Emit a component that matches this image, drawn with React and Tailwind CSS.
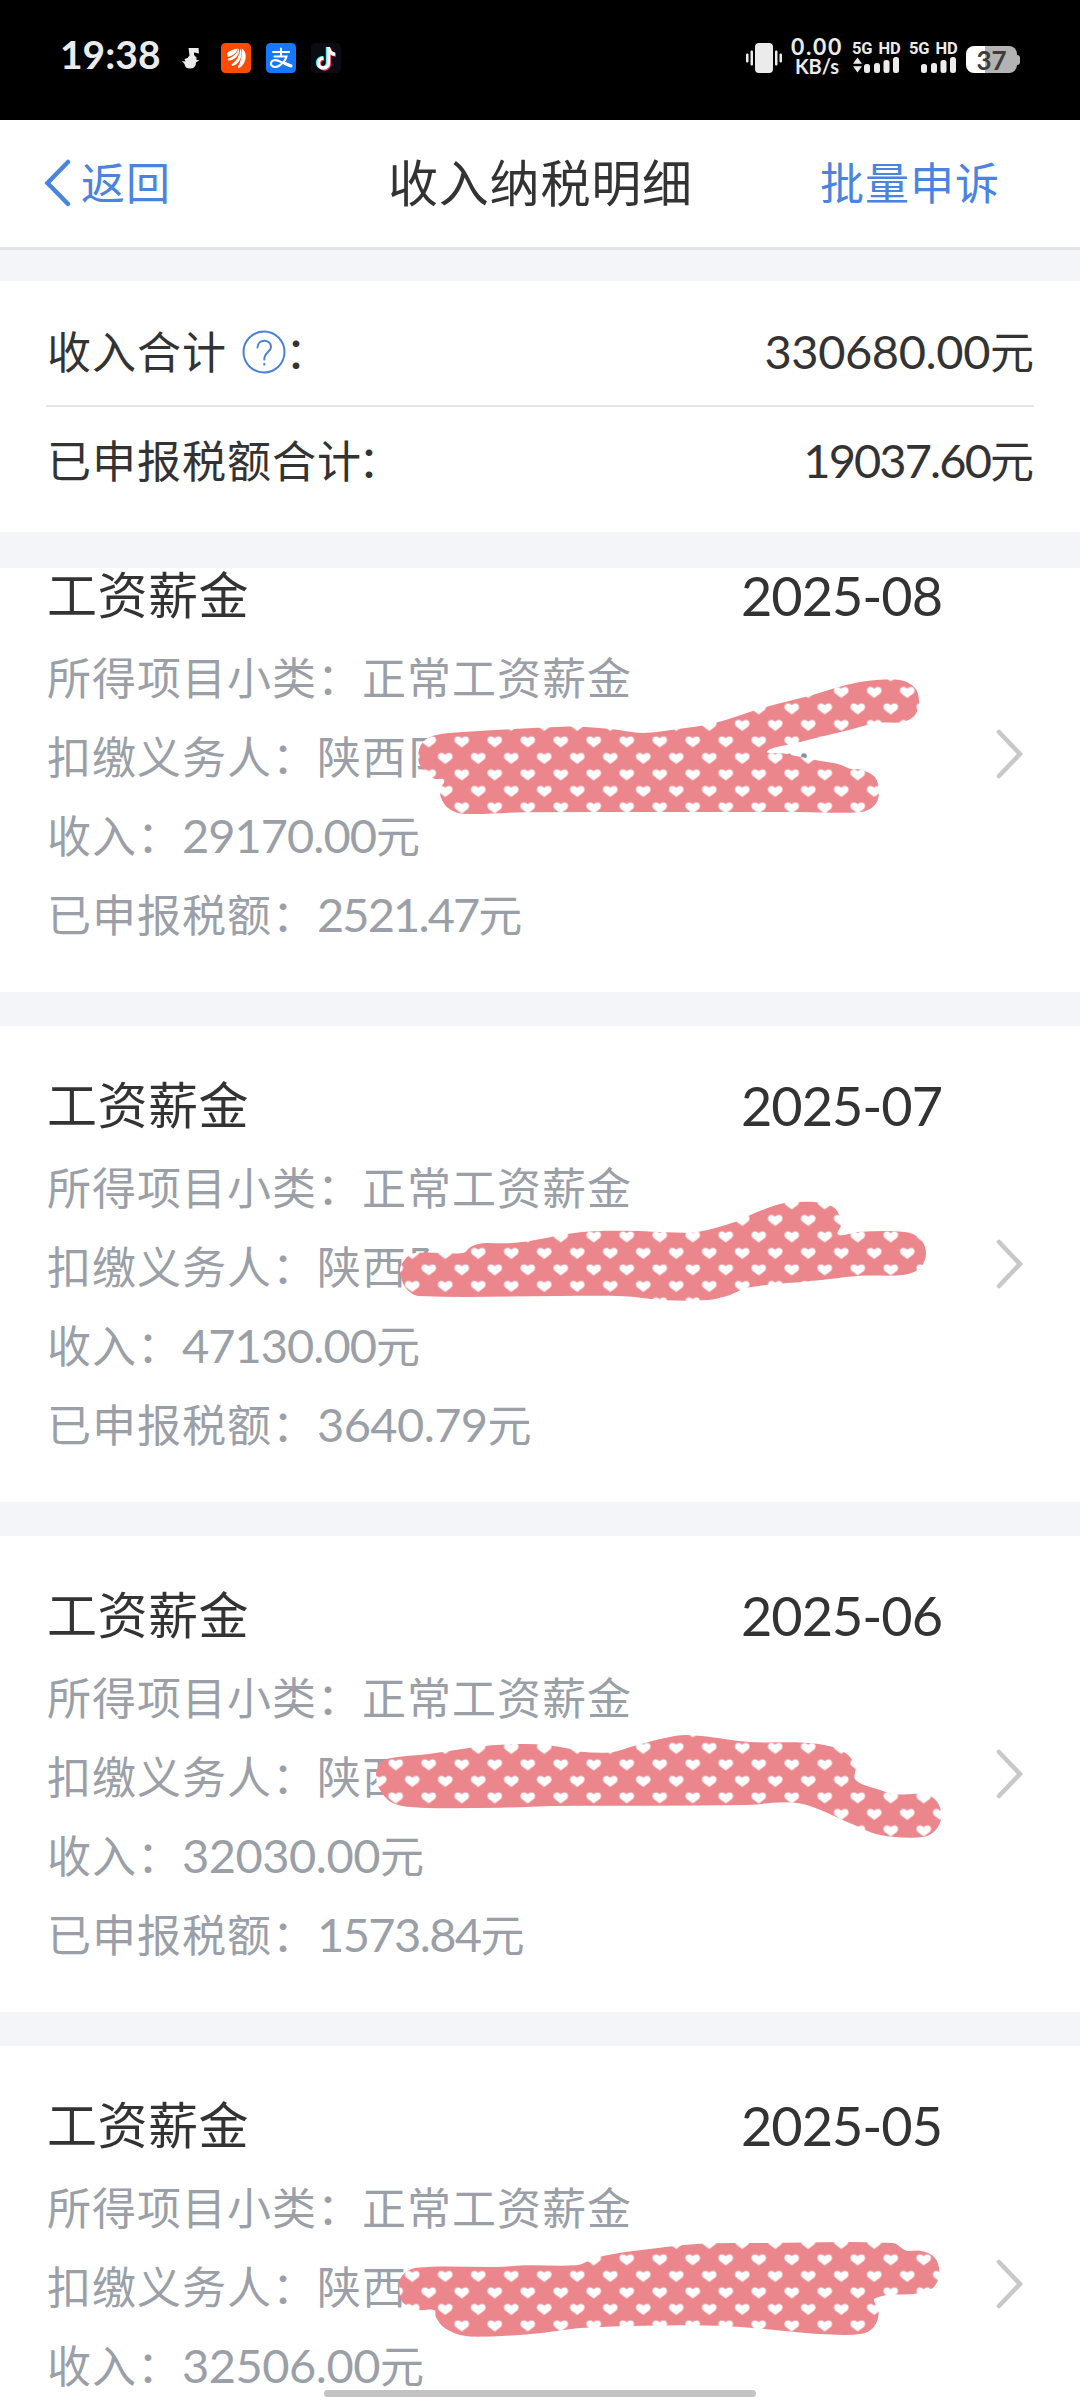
import React from 'react';

const records = [
  { month: '2025-08', agent: '陕西阝', income: '29170.00', tax: '2521.47', incomeFit: 'tracking-[-1px]', taxFit: 'tracking-[-1.9px]' },
  { month: '2025-07', agent: '陕西阝', income: '47130.00', tax: '3640.79', incomeFit: 'tracking-[-1px]', taxFit: 'tracking-[-0.6px]' },
  { month: '2025-06', agent: '陕西', income: '32030.00', tax: '1573.84', incomeFit: 'tracking-[-0.5px]', taxFit: 'tracking-[-1.6px]' },
  { month: '2025-05', agent: '陕西', income: '32506.00', tax: '', incomeFit: 'tracking-[-0.5px]', taxFit: '' },
];

// outlines of the brush marks, as x y pairs
const marks = [
  [418, 757, 423, 742, 436, 735, 463, 732, 513, 729, 563, 726.7, 586, 727, 613, 729.3, 643, 733, 678, 729, 716, 722.7, 766, 707, 810, 695.7, 846, 685, 869, 680.7, 900, 680, 915, 688, 919, 702, 915, 715, 903, 722, 877, 723, 846, 730.7, 800, 742, 767.6, 750.7, 785, 753.7, 819, 760.7, 838, 764, 852, 769.3, 861, 769.7, 874.7, 777, 879, 792, 874.7, 805, 861, 812, 800, 812, 524, 812.3, 463, 813.7, 448, 808, 440.7, 797, 440.7, 788, 444, 780, 434.6, 778.7, 423, 770],
  [400, 1272, 403, 1262, 414, 1253.3, 463, 1253, 471, 1246.7, 482.5, 1243.3, 505, 1243.3, 528, 1241.3, 567, 1234, 597, 1231, 639, 1231, 666, 1232.3, 697, 1232, 735, 1222, 746.5, 1216.7, 769.5, 1207.3, 785, 1203, 817, 1202.3, 832.6, 1206.7, 838.4, 1213.3, 841, 1225, 838.4, 1234.7, 857.5, 1232, 905, 1232, 920.7, 1239.3, 926, 1253.3, 920.7, 1267.3, 905, 1274.7, 861, 1275.7, 811.6, 1281, 750, 1287.3, 727, 1296, 708, 1300, 666, 1300.3, 624, 1296.3, 560, 1296, 419, 1296, 406, 1288.3],
  [376, 1775, 380, 1763.3, 389.5, 1758.3, 429, 1754, 468.6, 1748, 492, 1745.3, 524, 1744, 548, 1745.3, 569.5, 1748.7, 581, 1751.7, 611, 1752.3, 634.7, 1745.7, 666, 1737.7, 686, 1735, 710, 1737, 749, 1742, 805, 1742.7, 832, 1746.7, 848, 1755, 855.3, 1766.7, 855.7, 1780, 880, 1790, 894, 1794.3, 925, 1794.3, 937, 1801.7, 941.5, 1816.7, 935, 1830.7, 923, 1837, 892, 1836.7, 872, 1832.7, 852, 1824, 799, 1803.3, 745, 1805, 650, 1805.7, 556, 1806, 500, 1807.7, 421, 1807.7, 393.5, 1803.3, 380, 1790],
  [399.5, 2291.7, 401.3, 2276.7, 417, 2267.7, 497.7, 2267, 525, 2265.3, 576, 2265.3, 589.6, 2260.7, 603, 2256, 635.5, 2250.7, 700, 2243.7, 760, 2243, 892.6, 2243, 906.4, 2250.7, 920, 2250.7, 934, 2256.7, 939.4, 2271.7, 934, 2286.7, 918, 2293.3, 875.2, 2298.3, 878.8, 2311.7, 874, 2326.7, 860.5, 2334, 819, 2334, 787, 2331.3, 741, 2327, 695, 2325.3, 644.7, 2325.7, 580, 2328, 543.7, 2332.7, 502, 2336, 465.6, 2336, 445, 2328.3, 435.8, 2316.7, 434.4, 2310.3, 419.7, 2310, 403.6, 2303.3],
];

function smoothPath(p) {
  const n = p.length / 2;
  const at = (i) => {
    const k = ((i + n) % n) * 2;
    return [p[k], p[k + 1]];
  };
  let d = `M${p[0]} ${p[1]}`;
  for (let i = 0; i < n; i++) {
    const [a, b, c, e] = [at(i - 1), at(i), at(i + 1), at(i + 2)];
    const len = Math.hypot(c[0] - b[0], c[1] - b[1]);
    const t1 = Math.min(1, len / (Math.hypot(c[0] - a[0], c[1] - a[1]) || 1)) / 3;
    const t2 = Math.min(1, len / (Math.hypot(e[0] - b[0], e[1] - b[1]) || 1)) / 3;
    d += `C${b[0] + (c[0] - a[0]) * t1} ${b[1] + (c[1] - a[1]) * t1} ${c[0] - (e[0] - b[0]) * t2} ${c[1] - (e[1] - b[1]) * t2} ${c[0]} ${c[1]}`;
  }
  return d + 'Z';
}

function BrushMarks() {
  const heart = 'M0 5.6L-6 1C-8.6 -1.8 -7 -5.7 -3.7 -5.6C-1.8 -5.5 -0.6 -4.6 0 -3.6C0.6 -4.6 1.8 -5.5 3.7 -5.6C7 -5.7 8.6 -1.8 6 1Z';
  return (
    <svg className="pointer-events-none absolute left-0 top-0" width="1080" height="2400" viewBox="0 0 1080 2400">
      <defs>
        <pattern id="hearts" x="453.5" y="733.7" width="33" height="33" patternUnits="userSpaceOnUse">
          <rect width="33" height="33" fill="#eb868c" />
          <path d={heart} transform="translate(8.25 8.25)" fill="#fff" />
          <path d={heart} transform="translate(24.75 24.75)" fill="#fff" />
        </pattern>
      </defs>
      <circle cx="789" cy="756" r="2.5" fill="#9b9fa8" />
      <circle cx="804" cy="756" r="2.8" fill="#8b909a" />
      {marks.map((m, i) => (
        <path key={i} d={smoothPath(m)} fill="url(#hearts)" />
      ))}
    </svg>
  );
}

function Signal({ arrows }) {
  return (
    <div className="flex w-[47px] flex-col items-end">
      <span className="h-[17px] w-full whitespace-nowrap font-[Roboto] text-[16.5px] font-bold leading-[17px] tracking-[-0.1px] [word-spacing:2px]">5G HD</span>
      <svg width="47" height="17" viewBox="0 0 47 17" fill="#ebebeb">
        {arrows && <path d="M5.5 0.5L10 6.8H1ZM5.5 15.5L10 9.2H1Z" />}
        <rect x="12" y="7" width="6" height="9" rx="2.5" />
        <rect x="22" y="6" width="6" height="10" rx="2.5" />
        <rect x="31.5" y="3" width="6" height="13" rx="2.5" />
        <rect x="41" y="0" width="6" height="16" rx="2.5" />
      </svg>
    </div>
  );
}

function StatusBar() {
  return (
    <div className="flex h-[120px] items-start bg-black pt-[38px] text-[#ebebeb]">
      <span className="-mt-[2px] ml-[60px] w-[122px] whitespace-nowrap text-[39px] font-bold leading-[37px]">19:38</span>
      <svg className="mt-[10px]" width="18" height="21" viewBox="0 0 18 21" fill="#ebebeb">
        <path d="M6.5 0H16.5L17 5.5L12 4.5V7L14.5 9.5V12H17.5L14 14.5Q14 20.5 8 20.5Q3 20.5 2.5 16L0 13L3.5 13.5L2.5 11L5.5 10L7.5 7.5Z" />
      </svg>
      <svg className="ml-[21px] mt-[5px]" width="30" height="30" viewBox="0 0 30 30">
        <rect width="30" height="30" rx="4.5" fill="#fe4a03" />
        <g fill="#fff">
          <path d="M6 10Q11 6 17 5.5Q15.5 10 11 12.5Q8.500 14 6.500 13.500Z" />
          <path d="M6.5 16Q15 13 17.8 5.5Q19 10 15 14.5Q11 18 7.5 17.5Z" />
          <path d="M10.5 21.5Q18.500 16 19.3 5.5Q22 11.5 18.5 17.500Q15.5 22 11.5 23Z" />
          <path d="M17 23.5Q21.5 16 20.800 5.5Q25.800 8.5 24.400 16.5Q22.500 23 17.5 25.5Z" />
        </g>
      </svg>
      <svg className="ml-[15px] mt-[5px]" width="30" height="30" viewBox="0 0 30 30" fill="none" stroke="#fff" strokeLinecap="round">
        <rect width="30" height="30" rx="4.5" fill="#1677ff" stroke="none" />
        <path d="M7 9H23M15 5.5V13.5M8.5 13.5H20.5Q19 19 13.5 22.5C9 25.5 4.5 23.5 5 20C5.5 16.5 10 16.5 14 18.5L25 23" strokeWidth="2.1" />
        <path d="M19 20.5L25 23" strokeWidth="3" />
      </svg>
      <svg className="ml-[15px] mt-[5px]" width="30" height="30" viewBox="0 0 30 30" fill="none">
        <rect width="30" height="30" rx="4.5" fill="#0b0b14" />
        <path d="M16.5 4V19.5A5 5 0 1 1 11.8 14.7M16.5 5.5Q18 10.5 23 10.7" stroke="#25f4ee" strokeWidth="3.4" />
        <path d="M18.5 5V20.5A5 5 0 1 1 13.2 16M18.5 6Q20 11.7 25 12" stroke="#fe2c55" strokeWidth="3.4" />
        <path d="M17.5 4V20A5 5 0 1 1 12.5 15M17.5 5Q19 11 24 11.3" stroke="#fff" strokeWidth="3.4" />
      </svg>
      <svg className="ml-auto mt-[5px]" width="36" height="30" viewBox="0 0 36 30" fill="#ebebeb">
        <rect x="9" width="18" height="30" rx="4" />
        <rect x="0" y="10.5" width="2.5" height="9" rx="1" />
        <rect x="4.5" y="7.5" width="2.5" height="15" rx="1" />
        <rect x="29" y="7.5" width="2.5" height="15" rx="1" />
        <rect x="33.5" y="10.5" width="2.5" height="9" rx="1" />
      </svg>
      <div className="ml-[8px] flex w-[54px] flex-col items-center whitespace-nowrap font-bold">
        <span className="-mt-[2px] text-[23px] leading-[21px] tracking-[1.6px]">0.00</span>
        <span className="text-[20px] leading-[19px]">KB/s</span>
      </div>
      <div className="ml-[8px] flex gap-[10px] pt-[2px]">
        <Signal arrows />
        <Signal />
      </div>
      <div className="ml-[10px] mt-[8px] flex items-center">
        <div className="flex h-[27px] w-[51px] items-center justify-center rounded-[8px] bg-linear-to-r from-white from-[37%] to-[#b3b3b3] to-[37%] text-[26px] font-bold leading-none text-[#3c3c3c]">
          37
        </div>
        <div className="h-[10px] w-[3px] rounded-r-[3px] bg-[#b3b3b3]" />
      </div>
      <div className="w-[60px]" />
    </div>
  );
}

function NavBar() {
  return (
    <div className="flex h-[130px] items-center border-b-[3px] border-[#e2e4e7] bg-white pb-[2px] text-[44px] tracking-[1px] text-[#4a84e0]">
      <div className="flex w-[388px] items-center pl-[44px]">
        <svg width="27" height="48" viewBox="0 0 27 48" fill="none" stroke="#4a84e0" strokeWidth="4.5" strokeLinecap="round">
          <path d="M24 3L3.5 24L24 45" />
        </svg>
        <span className="ml-[10px] leading-[60px]">返回</span>
      </div>
      <span className="w-[432px] text-[50px] leading-[60px] tracking-[0.8px] text-[#333]">
        收入纳税明细
      </span>
      <span className="leading-[60px]">批量申诉</span>
    </div>
  );
}

function Summary() {
  return (
    <div className="mt-[31px] h-[251px] bg-white px-[46px] pt-[14px] text-[44px] text-[#333]">
      <div className="flex h-[112px] items-center justify-between border-b-2 border-[#e4e6e6] pt-[3px]">
        <div className="flex items-center pl-px tracking-[1px]">
          收入合计
          <svg className="ml-[15px] mr-[-1px]" width="44" height="44" viewBox="0 0 44 44" fill="none" stroke="#4a82d6" strokeWidth="2">
            <circle cx="22" cy="22" r="20.5" />
            <path d="M15.5 17.5C15.5 8.5 29 8.5 29 17C29 22 22.3 22 22.3 29.5" strokeLinecap="round" />
            <path d="M22.3 33V35.5" />
          </svg>
          ：
        </div>
        <span><span className="text-[47px] tracking-[-0.4px]">330680.00</span>元</span>
      </div>
      <div className="flex h-[107px] items-center justify-between">
        <span className="pl-px tracking-[1px]">已申报税额合计<span className="-ml-[4px]">：</span></span>
        <span><span className="text-[47px] tracking-[-1.9px]">19037.60</span>元</span>
      </div>
    </div>
  );
}

function RecordCard({ record }) {
  return (
    <div className="flex h-[476px] shrink-0 items-center bg-white pl-[47px] pr-[55px]">
      <div className="h-full flex-1 pt-[36px]">
        <div className="flex h-[87px] items-center justify-between pr-[53px] text-[50px] text-[#333]">
          <span className="tracking-[0.5px]">工资薪金</span>
          <span className="text-[54px] tracking-[-1px]">{record.month}</span>
        </div>
        <div className="whitespace-nowrap text-[44px] leading-[78.7px] tracking-[1px] text-[#9b9fa8] *:h-[78.7px]">
          <p>所得项目小类：正常工资薪金</p>
          <p>扣缴义务人：{record.agent}</p>
          <p>收入：<span className={`text-[47px] ${record.incomeFit}`}>{record.income}</span>元</p>
          {record.tax && (
            <p>已申报税额：<span className={`text-[47px] ${record.taxFit}`}>{record.tax}</span>元</p>
          )}
        </div>
      </div>
      <svg width="30" height="52" viewBox="0 0 30 52" fill="none" stroke="#c8c8c8" strokeWidth="4.5" strokeLinecap="round">
        <path d="M4 4L25 26L4 48" />
      </svg>
    </div>
  );
}

export default function App() {
  return (
    <div className="relative flex h-[2400px] w-[1080px] flex-col overflow-hidden bg-[#f4f5f9] font-[Lato,'Noto_Sans_CJK_SC',sans-serif]">
      <StatusBar />
      <NavBar />
      <Summary />
      {/* list is scrolled by 52px under the summary */}
      <div className="mt-[36px] flex-1 overflow-hidden">
        <div className="-mt-[52px] flex flex-col gap-[34px]">
          {records.map((r) => (
            <RecordCard key={r.month} record={r} />
          ))}
        </div>
      </div>
      <BrushMarks />
      <div className="absolute bottom-[3px] left-[324px] h-[7px] w-[432px] rounded-full bg-[#c3c3c3]" />
    </div>
  );
}
